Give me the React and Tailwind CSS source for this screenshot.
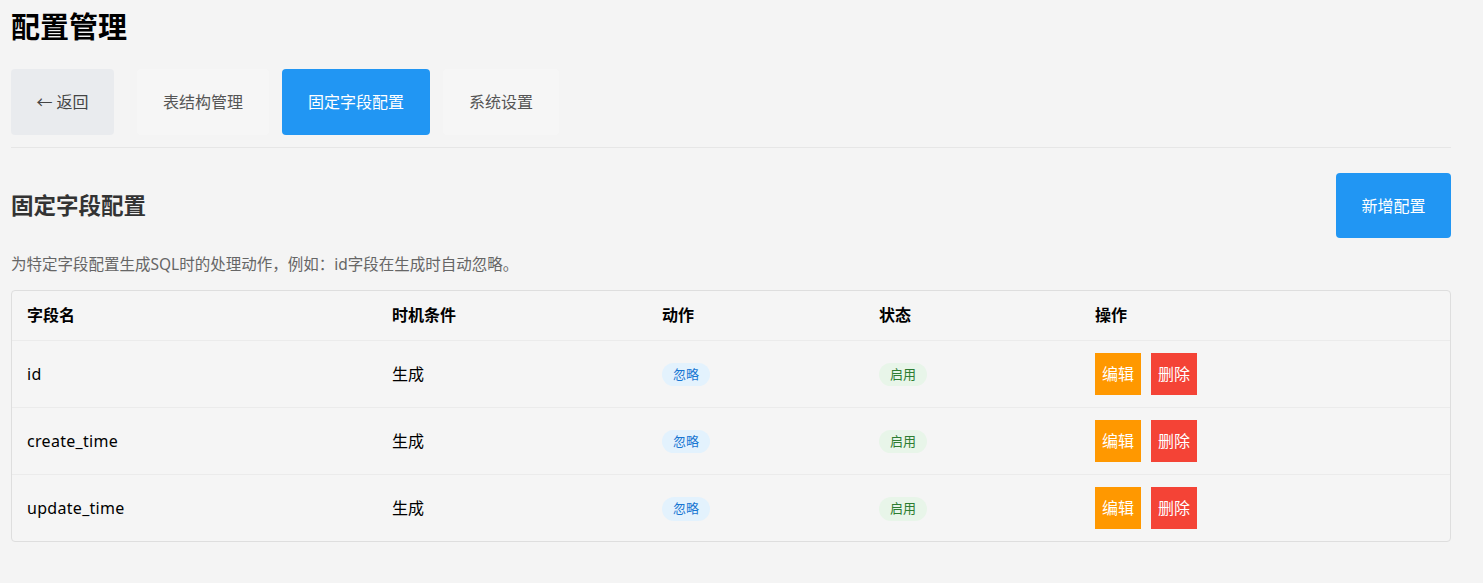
const rows = [
  { name: "id", cond: "生成", action: "忽略", status: "启用" },
  { name: "create_time", cond: "生成", action: "忽略", status: "启用" },
  { name: "update_time", cond: "生成", action: "忽略", status: "启用" },
];

const tabs = ["表结构管理", "固定字段配置", "系统设置"];

export default function App() {
  const active = "固定字段配置";
  return (
    <div
      className="min-h-[583px] bg-[#f4f4f4] px-[11px] pt-[8px] text-[#222]"
      style={{ fontFamily: '"Noto Sans", "Noto Sans CJK SC", sans-serif' }}
    >
      <div className="w-[1440px]">
        <h1 className="text-[29px] font-bold leading-[38px] text-black">配置管理</h1>

        <div className="mt-[23px] flex items-center gap-[13px] border-b border-[#e6e6e6] pb-[12px]">
          <button className="mr-[10px] h-[66px] w-[103px] rounded-[4px] bg-[#e9ebee] text-[16px] text-[#444]">
            ← 返回
          </button>
          {tabs.map((t) => (
            <button
              key={t}
              className={
                t === active
                  ? "h-[66px] rounded-[4px] bg-[#2196f3] px-[26px] text-[16px] text-white"
                  : "h-[66px] rounded-[4px] bg-[#f6f6f6] px-[26px] text-[16px] text-[#555]"
              }
            >
              {t}
            </button>
          ))}
        </div>

        <div className="mt-[25px] flex items-center justify-between">
          <h2 className="text-[22.5px] font-bold text-[#333]">固定字段配置</h2>
          <button className="h-[65px] w-[115px] rounded-[4px] bg-[#2196f3] text-[16px] text-white">
            新增配置
          </button>
        </div>

        <p className="mt-[15px] text-[15.5px] leading-[22px] text-[#666]">
          为特定字段配置生成SQL时的处理动作，例如：id字段在生成时自动忽略。
        </p>

        <div className="mt-[15px] overflow-hidden rounded-[4px] border border-[#dedede] bg-[#f5f5f5]">
          <table className="w-full table-fixed border-collapse text-left">
            <colgroup>
              <col className="w-[365px]" />
              <col className="w-[270px]" />
              <col className="w-[217px]" />
              <col className="w-[216px]" />
              <col />
            </colgroup>
            <thead>
              <tr className="h-[49px] border-b border-[#ebebeb] text-[16px] font-bold text-black">
                <th className="px-[15px]">字段名</th>
                <th className="px-[15px]">时机条件</th>
                <th className="px-[15px]">动作</th>
                <th className="px-[15px]">状态</th>
                <th className="px-[15px]">操作</th>
              </tr>
            </thead>
            <tbody>
              {rows.map((r, i) => (
                <tr
                  key={r.name}
                  className={
                    i < rows.length - 1
                      ? "h-[67px] border-b border-[#ebebeb] text-[16px] text-black"
                      : "h-[67px] text-[16px] text-black"
                  }
                >
                  <td className="px-[15px] tracking-[0.3px]">{r.name}</td>
                  <td className="px-[15px]">{r.cond}</td>
                  <td className="px-[15px]">
                    <span className="inline-block rounded-full bg-[#e3f2fd] px-[11px] py-[2px] text-[13px] text-[#1976d2]">
                      {r.action}
                    </span>
                  </td>
                  <td className="px-[15px]">
                    <span className="inline-block rounded-full bg-[#e8f5e9] px-[11px] py-[2px] text-[13px] text-[#2e7d32]">
                      {r.status}
                    </span>
                  </td>
                  <td className="px-[15px]">
                    <div className="flex gap-[10px]">
                      <button className="h-[42px] w-[46px] bg-[#ff9800] text-[16px] text-white">编辑</button>
                      <button className="h-[42px] w-[46px] bg-[#f44336] text-[16px] text-white">删除</button>
                    </div>
                  </td>
                </tr>
              ))}
            </tbody>
          </table>
        </div>
      </div>
    </div>
  );
}
